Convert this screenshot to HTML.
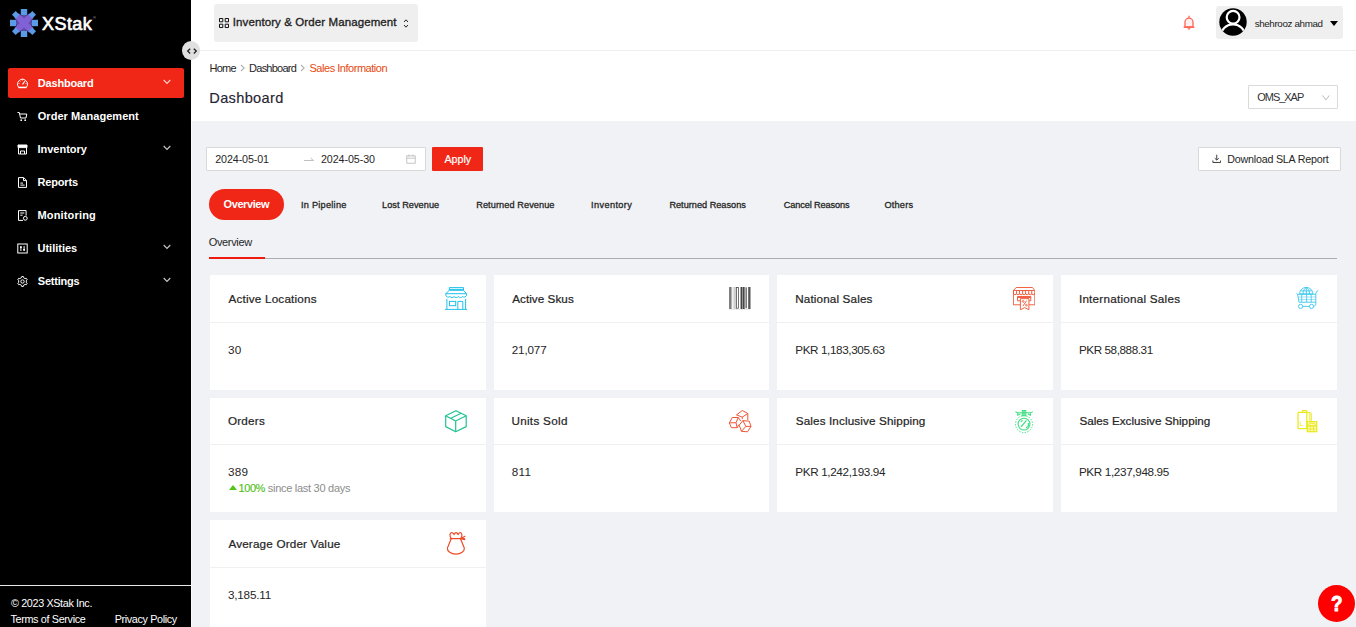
<!DOCTYPE html>
<html lang="en">
<head>
<meta charset="utf-8">
<title>Dashboard - Sales Information</title>
<style>
*{box-sizing:border-box;margin:0;padding:0}
html,body{width:1356px;height:627px;overflow:hidden;background:#f0f2f5;font-family:"Liberation Sans",sans-serif;color:#262626;}
body{position:relative}
.abs{position:absolute;white-space:nowrap}
/* sidebar */
#side{position:absolute;left:0;top:0;width:191px;height:627px;background:#000}
#logot{top:11.5px;font-size:18px;line-height:24px;color:#fff;-webkit-text-stroke:.65px #fff}
.mi{position:absolute;left:8px;width:176px;height:30px;border-radius:2px;color:#fff;font-weight:700;font-size:11px;line-height:30.5px}
.mi.on{background:#f02616}
.mi span{position:absolute;top:0;white-space:nowrap}
.mi svg.ic{position:absolute;left:9px;top:10px;width:11px;height:11px}
.mi svg.ch{position:absolute;left:155px;top:11px;width:8px;height:6px}
#foot{position:absolute;left:0;top:585px;width:191px;height:42px;border-top:1px solid #e8e8e8;color:#fff;font-size:10.800px}
#tog{left:182px;top:41.300px;width:18.200px;height:19px;border-radius:50%;background:#e0e0e0}
/* header */
#head{position:absolute;left:191px;top:0;width:1165px;height:121px;background:#fff}
#hline{position:absolute;left:191px;top:50px;width:1165px;height:1px;background:#eeeeee}
#app{left:214px;top:4px;width:204px;height:38px;background:#efefef;border-radius:3px}
#user{left:1216px;top:6px;width:127px;height:33px;background:#efefef;border-radius:3px}
.bc{top:61px;font-size:11px;line-height:14px;color:#262626}
#ttl{top:88.300px;font-size:14.600px;line-height:20px;color:#1f2533;-webkit-text-stroke:.15px #1f2533}
#sel{left:1248px;top:85px;width:90px;height:24px;border:1px solid #d9d9d9;background:#fff;border-radius:1px}
/* toolbar */
#dp{left:206px;top:147px;width:220px;height:24px;border:1px solid #d9d9d9;background:#fff;border-radius:1px}
#apply{left:432px;top:147px;width:51px;height:24px;background:#f02616;border-radius:1px;color:#fff;font-size:10.700px;line-height:24px;-webkit-text-stroke:.2px #fff}
#dl{left:1198px;top:147px;width:143px;height:24px;border:1px solid #d9d9d9;background:#fff;border-radius:1px}
.t12{font-size:10.700px;line-height:14px;color:#262626}
#pill{left:209px;top:189px;width:75px;height:31px;border-radius:16px;background:#f02616;color:#fff;font-weight:700;font-size:11px;line-height:31px;}
.tab{top:198.900px;font-size:9.200px;line-height:13px;color:#262626;font-weight:400;-webkit-text-stroke:.3px #262626}
#sub{top:235px;font-size:11px;line-height:14px;color:#262626}
#subline{left:209px;top:258px;width:1128px;height:1px;background:#adadaf}
#subred{left:209px;top:257px;width:56px;height:2px;background:#f01a0e}
/* cards */
.card{position:absolute;width:276px;height:115px;background:#fff;overflow:hidden}
.card.r2{height:114px}
.card.r2>*{margin-top:-1px}
.card .hd{position:absolute;left:0;top:47px;width:100%;height:1px;background:#f0f0f0}
.card .tt{position:absolute;top:16px;font-size:11.700px;line-height:16px;color:#262626;white-space:nowrap;-webkit-text-stroke:.22px #262626}
.card .vv{position:absolute;top:67.900px;font-size:11.700px;line-height:14px;color:#262626;white-space:nowrap}
.card svg{position:absolute}
#help{left:1317.800px;top:584.800px;width:37.200px;height:37.200px;border-radius:50%;background:#fe0000;color:#fff;font-weight:700;font-size:22px;line-height:38px;text-align:center;-webkit-text-stroke:.9px #fff}
/*LS*/
#logot{left:42.10px;letter-spacing:0.416px}
#m1{left:29.85px;letter-spacing:-0.207px}
#m2{left:29.75px;letter-spacing:0.050px}
#m3{left:29.50px;letter-spacing:-0.008px}
#m4{left:29.50px;letter-spacing:-0.172px}
#m5{left:29.50px;letter-spacing:0.158px}
#m6{left:29.50px;letter-spacing:-0.010px}
#m7{left:29.75px;letter-spacing:-0.207px}
#f1{left:11.00px;letter-spacing:-0.362px}
#f2{left:10.45px;letter-spacing:-0.335px}
#f3{left:114.75px;letter-spacing:-0.369px}
#appt{left:18.75px;letter-spacing:0.099px}
#usrt{left:38.65px;letter-spacing:-0.357px}
#bc1{left:209.60px;letter-spacing:-0.801px}
#bc2{left:249.10px;letter-spacing:-0.763px}
#bc3{left:309.50px;letter-spacing:-0.469px}
#ttl{left:209.30px;letter-spacing:0.320px}
#selt{left:8.35px;letter-spacing:-1.047px}
#d1{left:8.25px;letter-spacing:-0.095px}
#d2{left:113.90px;letter-spacing:-0.068px}
#applyt{left:12.40px;letter-spacing:0.015px}
#dlt{left:28.25px;letter-spacing:-0.202px}
#pillt{left:14.55px;letter-spacing:-0.417px}
#t1{left:301.00px;letter-spacing:0.245px}
#t2{left:382.00px;letter-spacing:0.045px}
#t3{left:476.20px;letter-spacing:0.078px}
#t4{left:590.95px;letter-spacing:0.395px}
#t5{left:669.40px;letter-spacing:-0.010px}
#t6{left:783.80px;letter-spacing:-0.131px}
#t7{left:884.45px;letter-spacing:0.200px}
#sub{left:208.75px;letter-spacing:-0.358px}
#c1t{left:18.40px;letter-spacing:0.209px}
#c1v{left:17.90px;letter-spacing:0.300px}
#c2t{left:18.20px;letter-spacing:0.050px}
#c2v{left:17.70px;letter-spacing:-0.140px}
#c3t{left:18.25px;letter-spacing:0.138px}
#c3v{left:18.25px;letter-spacing:-0.382px}
#c4t{left:17.90px;letter-spacing:0.239px}
#c4v{left:17.90px;letter-spacing:-0.417px}
#c5t{left:17.90px;letter-spacing:0.250px}
#c5v{left:17.90px;letter-spacing:0.275px}
#c5p{left:28.60px;letter-spacing:-0.449px}
#c5s{left:57.75px;letter-spacing:-0.279px}
#c6t{left:17.45px;letter-spacing:0.297px}
#c6v{left:17.70px;letter-spacing:0.325px}
#c7t{left:18.75px;letter-spacing:0.127px}
#c7v{left:18.25px;letter-spacing:-0.350px}
#c8t{left:18.40px;letter-spacing:0.013px}
#c8v{left:17.90px;letter-spacing:-0.343px}
#c9t{left:18.40px;letter-spacing:0.178px}
#c9v{left:17.90px;letter-spacing:-0.184px}
/*END*/
</style>
</head>
<body>
<div id="head"></div>
<div id="hline"></div>
<div id="side"></div>
<div class="abs" style="left:191px;top:121px;width:1px;height:506px;background:#fbfbfc"></div>

<!-- logo -->
<svg class="abs" style="left:9px;top:8px" width="30" height="30" viewBox="0 0 30 30">
  <circle cx="15" cy="15" r="8" fill="#5d4aa6"/>
  <g transform="rotate(45 15 15)" fill="#8161d6"><rect x="11.800" y="4.500" width="6.400" height="21"/><rect x="4.500" y="11.800" width="21" height="6.400"/></g>
  <g fill="#5a9ae6">
    <rect x="11.800" y="1" width="6.400" height="6.200"/><rect x="11.800" y="22.800" width="6.400" height="6.200"/>
    <rect x="1" y="11.800" width="6.200" height="6.400"/><rect x="22.800" y="11.800" width="6.200" height="6.400"/>
    <g transform="rotate(45 15 15)"><rect x="12.400" y=".6" width="5.200" height="5.400"/><rect x="12.400" y="24" width="5.200" height="5.400"/><rect x=".6" y="12.400" width="5.400" height="5.200"/><rect x="24" y="12.400" width="5.400" height="5.200"/></g>
  </g>
</svg>
<div id="logot" class="abs">XStak</div><div class="abs" style="left:93px;top:14.500px;font-size:4px;line-height:5px;color:#bbb">®</div>
<div id="tog" class="abs"><svg width="19" height="19" viewBox="0 0 19 19" style="position:absolute;left:0;top:0"><path d="M8.200 7.200 5.700 9.600l2.500 2.400M11.800 7.200l2.500 2.400-2.500 2.400" fill="none" stroke="#1a1a1a" stroke-width="1.250" transform="translate(0 .5)"/></svg></div>

<!-- menu -->
<div class="mi on" style="top:68px"><svg class="ic" viewBox="0 0 11 11"><path d="M1.6 9.2A4.9 4.9 0 1 1 9.4 9.2Z" fill="none" stroke="#fff" stroke-width="1"/><path d="M5.5 6.3 8 3" stroke="#fff" stroke-width="1.1" fill="none"/><path d="M1.5 9.6h8" stroke="#fff" stroke-width="1.2"/><path d="M5.5 1.300v1.200M1.400 5.600h1.200M9.600 5.600H8.400M2.600 2.700l.8.800" stroke="#fff" stroke-width=".8"/></svg><span id="m1">Dashboard</span><svg class="ch" viewBox="0 0 8 6"><path d="M.7 1l3.3 3.4L7.3 1" fill="none" stroke="#fff" stroke-opacity=".78" stroke-width="1.15"/></svg></div>
<div class="mi" style="top:101px"><svg class="ic" viewBox="0 0 11 11"><path d="M.5 1.5h1.8l1.2 5.5h5.5l.8-4H2.8" fill="none" stroke="#fff" stroke-width="1"/><circle cx="4.2" cy="9.2" r=".9" fill="#fff"/><circle cx="8.2" cy="9.2" r=".9" fill="#fff"/></svg><span id="m2">Order Management</span></div>
<div class="mi" style="top:134px"><svg class="ic" viewBox="0 0 11 11"><path d="M1 1h9v2.6H1zM1.5 3.6V10h8V3.6M3.5 10V7h4v3" fill="none" stroke="#fff" stroke-width="1"/><path d="M1 1h9v2H1z" fill="#fff"/></svg><span id="m3">Inventory</span><svg class="ch" viewBox="0 0 8 6"><path d="M.7 1l3.3 3.4L7.3 1" fill="none" stroke="#fff" stroke-opacity=".78" stroke-width="1.15"/></svg></div>
<div class="mi" style="top:167px"><svg class="ic" viewBox="0 0 11 11"><path d="M1.5.6h5.2l2.8 2.8v7H1.5zM6.5.8v2.8h2.8M3.4 6.100h2.600M3.400 8.100h4.200" fill="none" stroke="#fff" stroke-width="1"/></svg><span id="m4">Reports</span></div>
<div class="mi" style="top:200px"><svg class="ic" viewBox="0 0 11 11"><path d="M6 10.4H1.5V.6h7.6v5M3.3 3h4M3.3 5.2h2.2" fill="none" stroke="#fff" stroke-width="1"/><circle cx="8.3" cy="8.3" r="1.9" fill="none" stroke="#fff" stroke-width="1"/></svg><span id="m5">Monitoring</span></div>
<div class="mi" style="top:233px"><svg class="ic" viewBox="0 0 11 11"><rect x=".8" y="1" width="9.4" height="9" fill="none" stroke="#fff" stroke-width="1"/><path d="M3.9 3v5M7.1 3v5" stroke="#fff" stroke-width="1"/><path d="M3 4.2h1.8M6.2 6.8H8" stroke="#fff" stroke-width="1.4"/></svg><span id="m6">Utilities</span><svg class="ch" viewBox="0 0 8 6"><path d="M.7 1l3.3 3.4L7.3 1" fill="none" stroke="#fff" stroke-opacity=".78" stroke-width="1.15"/></svg></div>
<div class="mi" style="top:266px"><svg class="ic" viewBox="0 0 11 11"><path d="M4.35 1.77 L4.65 0.57 L6.35 0.57 L6.65 1.77 L8.15 2.64 L9.34 2.30 L10.19 3.77 L9.30 4.64 L9.30 6.36 L10.19 7.23 L9.34 8.70 L8.15 8.36 L6.65 9.23 L6.35 10.43 L4.65 10.43 L4.35 9.23 L2.85 8.36 L1.66 8.70 L0.81 7.23 L1.70 6.36 L1.70 4.64 L0.81 3.77 L1.66 2.30 L2.85 2.64Z" fill="none" stroke="#fff" stroke-width="1" stroke-linejoin="round"/><circle cx="5.5" cy="5.5" r="1.7" fill="none" stroke="#fff" stroke-width="1"/></svg><span id="m7">Settings</span><svg class="ch" viewBox="0 0 8 6"><path d="M.7 1l3.3 3.4L7.3 1" fill="none" stroke="#fff" stroke-opacity=".78" stroke-width="1.15"/></svg></div>

<div id="foot"><div id="f1" class="abs" style="top:10.800px">© 2023 XStak Inc.</div><div id="f2" class="abs" style="top:26.800px">Terms of Service</div><div id="f3" class="abs" style="top:26.800px">Privacy Policy</div></div>

<!-- header -->
<div id="app" class="abs"><svg class="abs" style="left:5px;top:14px" width="10" height="10" viewBox="0 0 10 10"><path d="M.5.500h3.300v3.300H.5zM6.200.500h3.300v3.300H6.200zM.5 6.200h3.300v3.300H.5zM6.200 6.200h3.300v3.300H6.200z" fill="none" stroke="#111" stroke-width="1"/></svg><div id="appt" class="abs" style="top:11.200px;font-size:11.500px;line-height:14px;color:#222;-webkit-text-stroke:.32px #222">Inventory &amp; Order Management</div><svg class="abs" style="left:189px;top:14px" width="6" height="11" viewBox="0 0 6 11"><path d="M1 4l2-2.200L5 4M1 7l2 2.200L5 7" fill="none" stroke="#222" stroke-width="1"/></svg></div>

<svg class="abs" style="left:1183px;top:15px" width="12" height="16" viewBox="0 0 12 16"><path d="M2 12V7.200a4 4 0 0 1 8 0V12z" fill="#fff1ef" stroke="#ff6253" stroke-width="1.300"/><path d="M.6 12.200h10.800" stroke="#ff6253" stroke-width="1.300"/><path d="M6 .8v2" stroke="#ff6253" stroke-width="1.300"/><path d="M4.200 13.200h3.600L6 14.900z" fill="#ff6253"/></svg>

<div id="user" class="abs"><svg class="abs" style="left:2.5px;top:2.3px" width="28" height="28" viewBox="0 0 28 28"><defs><clipPath id="av"><circle cx="14" cy="14" r="13.7"/></clipPath></defs><circle cx="14" cy="14" r="13.7" fill="#000"/><g clip-path="url(#av)" fill="none" stroke="#fff" stroke-width="2.2"><circle cx="14.1" cy="9.2" r="6.4"/><path d="M1.5 28.800a12.500 12.500 0 0 1 25 0"/></g></svg><div id="usrt" class="abs" style="top:10.5px;font-size:9.8px;line-height:13px;color:#222">shehrooz ahmad</div><svg class="abs" style="left:114px;top:15px" width="8" height="5" viewBox="0 0 8 5"><path d="M0 0h8L4 5z" fill="#000"/></svg></div>

<div id="bc1" class="abs bc">Home</div>
<svg class="abs" style="left:240px;top:64px" width="5" height="8" viewBox="0 0 5 8"><path d="M1 1l3.200 3L1 7" fill="none" stroke="#b0b0b0" stroke-width="1.050"/></svg>
<div id="bc2" class="abs bc">Dashboard</div>
<svg class="abs" style="left:300px;top:64px" width="5" height="8" viewBox="0 0 5 8"><path d="M1 1l3.200 3L1 7" fill="none" stroke="#b0b0b0" stroke-width="1.050"/></svg>
<div id="bc3" class="abs bc" style="color:#e5490f">Sales Information</div>
<div id="ttl" class="abs">Dashboard</div>
<div id="sel" class="abs"><div id="selt" class="abs" style="top:5px;font-size:11px;line-height:13px;color:#333">OMS_XAP</div><svg class="abs" style="left:72.600px;top:8.800px" width="8" height="6" viewBox="0 0 8 6"><path d="M.5.400 3.900 5 7.300.400" fill="none" stroke="#bdbdbd" stroke-width="1"/></svg></div>

<!-- toolbar -->
<div id="dp" class="abs"><div id="d1" class="abs t12" style="top:4px">2024-05-01</div><svg class="abs" style="left:97px;top:8px" width="10" height="6" viewBox="0 0 10 6"><path d="M0 4.500h9.500L6.500 2" fill="none" stroke="#c0c0c0" stroke-width="1"/></svg><div id="d2" class="abs t12" style="top:4px">2024-05-30</div><svg class="abs" style="left:198.900px;top:5.800px" width="10" height="10" viewBox="0 0 11 11"><path d="M.800 2h9.400v8.200H.800zM.800 4.600h9.400M3.200.600v2.400M7.800.600v2.400" fill="none" stroke="#bfbfbf" stroke-width="1"/></svg></div>
<div id="apply" class="abs"><div id="applyt" class="abs">Apply</div></div>
<div id="dl" class="abs"><svg class="abs" style="left:12.500px;top:6px" width="9.500" height="9.500" viewBox="0 0 11 11"><path d="M5.500.800v6M3.200 4.800l2.300 2.300 2.300-2.300M1 7.500v2.300h9V7.500" fill="none" stroke="#333" stroke-width="1.100"/></svg><div id="dlt" class="abs t12" style="top:4px">Download SLA Report</div></div>

<div id="pill" class="abs"><div id="pillt" class="abs">Overview</div></div>
<div id="t1" class="abs tab">In Pipeline</div>
<div id="t2" class="abs tab">Lost Revenue</div>
<div id="t3" class="abs tab">Returned Revenue</div>
<div id="t4" class="abs tab">Inventory</div>
<div id="t5" class="abs tab">Returned Reasons</div>
<div id="t6" class="abs tab">Cancel Reasons</div>
<div id="t7" class="abs tab">Others</div>

<div id="sub" class="abs">Overview</div>
<div id="subline" class="abs"></div>
<div id="subred" class="abs"></div>

<!-- cards -->
<div class="card" style="left:210px;top:275px"><svg style="left:235.100px;top:12px" width="22" height="23" viewBox="0 0 22 23" fill="none" stroke="#20c0ea" stroke-width="1"><path d="M4.300.600h14.200v2.700H4.300zM4.300 2.400h14.200"/><path d="M4.300 3.300 .8 6.700h20.800l-3.100-3.400"/><path d="M.8 6.700v1.500a2.500 2.500 0 0 0 4.100 1.300 2.700 2.700 0 0 0 4.200 0 2.700 2.700 0 0 0 4.200 0 2.700 2.700 0 0 0 4.200 0 2.500 2.500 0 0 0 4.100-1.300V6.700"/><path d="M1.900 12v10.300M20.600 12v10.300M0 22.400h22"/><rect x="4.500" y="14.400" width="6.200" height="4.300"/><path d="M12.800 22.400v-8h5v8"/></svg><div id="c1t" class="tt">Active Locations</div><div class="hd"></div><div id="c1v" class="vv">30</div></div>
<div class="card" style="left:494px;top:275px;width:275px"><svg style="left:234.900px;top:11.900px" width="22" height="23" viewBox="0 0 22 23"><rect x=".3" y="0" width="1.500" height="22" fill="#4a4a4a"/><rect x="1.800" y="0" width="1.400" height="22" fill="#b4b4b4"/><rect x="4.400" y="0" width="2.700" height="22" fill="#cfcfcf"/><rect x="7.600" y=".4" width="1.900" height="20.800" fill="#fff" stroke="#3a3a3a" stroke-width=".7"/><rect x="11.100" y="0" width=".9" height="22" fill="#a0a0a0"/><rect x="12" y="0" width="1.100" height="22" fill="#444"/><rect x="13.100" y="0" width=".9" height="22" fill="#8a8a8a"/><rect x="14" y="0" width="1.700" height="22" fill="#474747"/><rect x="15.700" y=".3" width="1.600" height="21" fill="#adadad"/><rect x="17.100" y=".3" width=".6" height="21" fill="#3a3a3a"/><rect x="19.200" y="0" width="2.300" height="22" fill="#555"/><path d="M.5 22.500h21" stroke="#c8c8c8" stroke-width=".6" stroke-dasharray="1 .6"/></svg><div id="c2t" class="tt">Active Skus</div><div class="hd"></div><div id="c2v" class="vv">21,077</div></div>
<div class="card" style="left:777px;top:275px"><svg style="left:236.100px;top:11.900px" width="22" height="23" viewBox="0 0 22 23" fill="none" stroke="#f0512e" stroke-width=".9"><path d="M3.200.500h16.300l2.300 3H.4z"/><path d="M.4 3.500v14.300h6.800M21.800 3.500v14.300h-5.700"/><path d="M.4 3.500v2.700a1.500 1.500 0 0 0 3.060 0V3.500m0 2.700a1.500 1.500 0 0 0 3.060 0V3.500m0 2.700a1.500 1.500 0 0 0 3.060 0V3.500m0 2.700a1.500 1.500 0 0 0 3.060 0V3.500m0 2.700a1.500 1.500 0 0 0 3.060 0V3.500m0 2.700a1.500 1.500 0 0 0 3.060 0V3.500m0 2.700a1.500 1.500 0 0 0 3.040 0"/><path d="M7.200 13.800H4.500V9.500h13.300v4.300h-1.700M4.500 10.500h13.300" stroke-width=".9"/><path d="M7.400 11.600h8.500v11.200l-4.250-2.200L7.400 22.800z"/><path d="M13.600 13.600l-3.600 5.400" stroke-width=".9"/><circle cx="10.200" cy="14.400" r=".9" stroke-width=".8"/><circle cx="13.400" cy="18.200" r=".9" stroke-width=".8"/></svg><div id="c3t" class="tt">National Sales</div><div class="hd"></div><div id="c3v" class="vv">PKR 1,183,305.63</div></div>
<div class="card" style="left:1061px;top:275px"><svg style="left:234.800px;top:12.100px" width="23" height="22" viewBox="0 0 23 22" fill="none" stroke="#2ec3ec" stroke-width=".85"><path d="M3.600 6.900a6.700 6.500 0 0 1 13.400 0zM10.300.4v6.500M7 6.900C7 4 8.500 1.500 10.300.4c1.800 1.100 3.300 3.600 3.300 6.500M4.700 3.900h11.200"/><path d="M.4 6.300l1.200 1h18.200M1.600 7.300 3 15.200h16.800V7.300"/><path d="M2.100 10h17.700M2.600 12.600h17.200" stroke-opacity=".55"/><path d="M5.700 7.300v7.900M10.600 7.300v7.900M15.200 7.300v7.900" stroke-opacity=".9"/><path d="M19.800 7.300c0-2 1.200-3.300 2.600-4"/><path d="M19.800 15.200v1.700c0 1.300-.9 2.300-2.200 2.500M6.800 19.400h6.500"/><circle cx="4.600" cy="19.400" r="2.100"/><circle cx="15.500" cy="19.400" r="2.100"/></svg><div id="c4t" class="tt">International Sales</div><div class="hd"></div><div id="c4v" class="vv">PKR 58,888.31</div></div>

<div class="card r2" style="left:210px;top:398px"><svg style="left:235.200px;top:12.800px" width="22" height="23" viewBox="0 0 22 23" fill="none" stroke="#1fc393" stroke-width="1.200" stroke-linejoin="round"><path d="M10.900.700 21.200 5.800v10.800L10.700 21.800.7 16.600V5.800z"/><path d="M.7 5.800l10 5.200 10.500-5.200M10.700 11v10.800M5.800 8.300l10.300-5"/></svg><div id="c5t" class="tt">Orders</div><div class="hd"></div><div id="c5v" class="vv">389</div><svg style="left:19.300px;top:87.700px" width="8" height="5" viewBox="0 0 8 5"><path d="M0 5 4 0l4 5z" fill="#52c41a"/></svg><div id="c5p" class="abs" style="top:83.600px;font-size:11px;line-height:14px;color:#4fc21a;-webkit-text-stroke:.15px #4fc21a">100%</div><div id="c5s" class="abs" style="top:83.600px;font-size:11px;line-height:14px;color:#8c8c8c">since last 30 days</div></div>
<div class="card r2" style="left:494px;top:398px;width:275px"><svg style="left:235.100px;top:12.800px" width="23" height="23" viewBox="0 0 23 23" fill="none" stroke="#ef5636" stroke-width="1" stroke-linejoin="round"><path d="M7.500 4.900 13.300.500l5.500 3v6.600M7.500 4.900l5.800 2.200 5.500-3.600M13.300 7.100v2"/><path d="M3.300 7.500H9.300L7 12.700 .3 12.900zM.3 12.900 2.400 17.700H8.200L7 12.700M9.300 7.500 11.700 11M8.200 17.700 9.900 14.600"/><path d="M13.900 10.600l6.300.6 1.800 5.200-3.500 5.400-6-.5-2.300-6.100zM13.900 10.600l2.900 5.800 5.200 0M16.800 16.400l-4.300 4.900"/></svg><div id="c6t" class="tt">Units Sold</div><div class="hd"></div><div id="c6v" class="vv">811</div></div>
<div class="card r2" style="left:777px;top:398px"><svg style="left:238.200px;top:13px" width="19" height="23" viewBox="0 0 19 23" fill="none" stroke="#3fdf82" stroke-width="1"><rect x="7.300" y=".5" width="3.500" height="5.300" fill="#3fdf82" fill-opacity=".35"/><path d="M9 .5v5.300M1.800 2.700h14.600M.4 1.600l2.800 1.800M17.800 1.600 15 3.400M2.800 2.900v2.300l2.600-1.300M15.400 2.900v2.300l-2.600-1.300" stroke-width="1.100"/><circle cx="9" cy="14.100" r="8.500" stroke-dasharray="1.400 1.400" stroke-width="1"/><circle cx="9" cy="14.100" r="5.900" stroke-width="1.100"/><path d="M11.500 10.300 6 16.800M5.800 11.600l1.800-1.200M11 17.800l2.200-1.300.2-3.500" stroke-width="1.200"/></svg><div id="c7t" class="tt">Sales Inclusive Shipping</div><div class="hd"></div><div id="c7v" class="vv">PKR 1,242,193.94</div></div>
<div class="card r2" style="left:1061px;top:398px"><svg style="left:236.200px;top:13px" width="21" height="23" viewBox="0 0 21 23" fill="none" stroke="#eaea22" stroke-width="1.300"><path d="M5.400 2.400V1.300q0-.8.800-.8h2.800q.8 0 .8.800v1.100"/><rect x="1" y="2.400" width="8.800" height="16.300" rx=".6"/><path d="M9.800 2.600h3.600q.9 0 .9.900v8.200M12.800 3v8.600" stroke-width="1"/><path d="M3.300 11.500v4h2.400" stroke-width=".9" stroke-opacity=".8"/><rect x="10.300" y="11.700" width="9.400" height="10" fill="#f6f680" fill-opacity=".5"/><path d="M11.500 15.600a3.500 2.600 0 0 1 7 0zM10.300 16.300h9.400M13.300 16.300v5.400M16.500 16.300v5.400M10.300 19h9.400" stroke-width=".9"/></svg><div id="c8t" class="tt">Sales Exclusive Shipping</div><div class="hd"></div><div id="c8v" class="vv">PKR 1,237,948.95</div></div>

<div class="card" style="left:210px;top:520px"><svg style="left:237.300px;top:11.900px" width="19" height="23" viewBox="0 0 19 23" fill="none" stroke="#ee4b28" stroke-width="1.200" stroke-linecap="round" stroke-linejoin="round"><path d="M4.300 6.500C2.300 4 2.600.7 4.800.7c1.300 0 1.700 1.200 2.300 1.900C7.700 1.300 8.400.6 9 .6s1.600.7 2 2c.5-.8 1-1.900 2.300-1.900 2 0 2.200 3.300.3 5.800"/><path d="M3.300 6.700h14.200M13.600 6.700l4.300-2.400M13.600 6.700l4.200.9"/><path d="M4.100 7 .5 15.800c-.7 3.600 3.700 6.300 8.400 6.300s9.100-2.700 8.300-6.300L13.600 7"/></svg><div id="c9t" class="tt">Average Order Value</div><div class="hd"></div><div id="c9v" class="vv">3,185.11</div></div>

<div id="help" class="abs"><span style="display:inline-block;transform:scaleX(.86)">?</span></div>
</body>
</html>
